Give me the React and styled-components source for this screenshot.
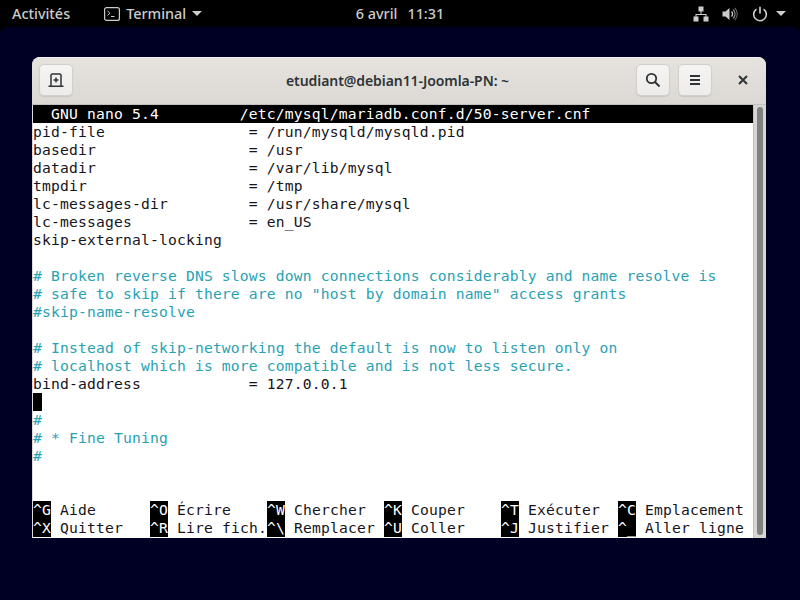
import React from "react";
import styled, { createGlobalStyle } from "styled-components";

const GlobalStyle = createGlobalStyle`
  html, body {
    margin: 0;
    padding: 0;
    background: #000;
  }
`;

const CONFIG_LINES = [
  { text: "pid-file                = /run/mysqld/mysqld.pid" },
  { text: "basedir                 = /usr" },
  { text: "datadir                 = /var/lib/mysql" },
  { text: "tmpdir                  = /tmp" },
  { text: "lc-messages-dir         = /usr/share/mysql" },
  { text: "lc-messages             = en_US" },
  { text: "skip-external-locking" },
  { text: "" },
  { text: "# Broken reverse DNS slows down connections considerably and name resolve is", comment: true },
  { text: '# safe to skip if there are no "host by domain name" access grants', comment: true },
  { text: "#skip-name-resolve", comment: true },
  { text: "" },
  { text: "# Instead of skip-networking the default is now to listen only on", comment: true },
  { text: "# localhost which is more compatible and is not less secure.", comment: true },
  { text: "bind-address            = 127.0.0.1" },
  { cursor: true },
  { text: "#", comment: true },
  { text: "# * Fine Tuning", comment: true },
  { text: "#", comment: true },
  { text: "" },
  { text: "" },
];

const SHORTCUTS = [
  [
    ["^G", "Aide"],
    ["^O", "Écrire"],
    ["^W", "Chercher"],
    ["^K", "Couper"],
    ["^T", "Exécuter"],
    ["^C", "Emplacement"],
  ],
  [
    ["^X", "Quitter"],
    ["^R", "Lire fich."],
    ["^\\", "Remplacer"],
    ["^U", "Coller"],
    ["^J", "Justifier"],
    ["^_", "Aller ligne"],
  ],
];

const App = () => {
  return (
    <Screen>
      <GlobalStyle />
      <TopBar>
        <BarLeft>
          <BarLabel>Activités</BarLabel>
          <AppMenu>
            <svg width="16" height="16" viewBox="0 0 16 16" fill="none">
              <rect x="0.6" y="1.6" width="14.8" height="12.8" rx="2" stroke="#ccc" strokeWidth="1.2" />
              <path d="M3.5 5l2.4 2.2-2.4 2.200" stroke="#ccc" strokeWidth="1" />
              <path d="M7 10.500h3.500" stroke="#ccc" strokeWidth="1" />
            </svg>
            <BarLabel>Terminal</BarLabel>
            <Caret />
          </AppMenu>
        </BarLeft>
        <Clock>
          <span>6 avril</span>
          <span>11:31</span>
        </Clock>
        <BarRight>
          <svg width="16" height="16" viewBox="0 0 16 16" fill="#ccc">
            <rect x="5.500" y="0.500" width="5" height="5" />
            <rect x="0.500" y="10.500" width="5" height="5" />
            <rect x="10.500" y="10.500" width="5" height="5" />
            <path d="M7.500 5h1v3h5v3h-1V9H3.500v2h-1V8h5z" />
          </svg>
          <svg width="16" height="16" viewBox="0 0 16 16" fill="none">
            <path d="M0.500 5.500h3L7.500 2v12l-4-3.500h-3z" fill="#ccc" />
            <path d="M9.500 5.500a3.500 3.500 0 0 1 0 5" stroke="#ccc" strokeWidth="1.300" />
            <path d="M11 3.500a6 6 0 0 1 0 9" stroke="#888" strokeWidth="1.200" />
            <path d="M12.800 2a8.500 8.500 0 0 1 0 12" stroke="#666" strokeWidth="1.100" />
          </svg>
          <PowerGroup>
            <svg width="16" height="16" viewBox="0 0 16 16" fill="none">
              <path d="M4.500 3.200a6.300 6.300 0 1 0 7 0" stroke="#ccc" strokeWidth="1.600" />
              <path d="M8 0.800v6.700" stroke="#ccc" strokeWidth="1.700" />
            </svg>
            <Caret />
          </PowerGroup>
        </BarRight>
      </TopBar>
      <Desktop>
        <Window>
          <HeaderBar>
            <HeaderButton>
              <svg width="16" height="16" viewBox="0 0 16 16" fill="none">
                <path d="M3 14V3.500A1.500 1.500 0 0 1 4.500 2h7A1.500 1.500 0 0 1 13 3.500V14" stroke="#2e3436" strokeWidth="1.500" />
                <path d="M0.500 14.200h15" stroke="#2e3436" strokeWidth="1.500" />
                <path d="M8 5.500v5M5.500 8h5" stroke="#2e3436" strokeWidth="1.500" />
              </svg>
            </HeaderButton>
            <Title>etudiant@debian11-Joomla-PN: ~</Title>
            <HeaderActions>
              <HeaderButton>
                <svg width="16" height="16" viewBox="0 0 16 16" fill="none">
                  <circle cx="6.500" cy="6.500" r="4.700" stroke="#2e3436" strokeWidth="1.800" />
                  <path d="M10 10l4.500 4.500" stroke="#2e3436" strokeWidth="2" />
                </svg>
              </HeaderButton>
              <HeaderButton>
                <svg width="16" height="16" viewBox="0 0 16 16" fill="#2e3436">
                  <rect x="3" y="3" width="10" height="2" />
                  <rect x="3" y="7" width="10" height="2" />
                  <rect x="3" y="11" width="10" height="2" />
                </svg>
              </HeaderButton>
              <CloseButton>
                <svg width="10" height="10" viewBox="0 0 10 10" fill="none">
                  <path d="M1 1l8 8M9 1l-8 8" stroke="#2e3436" strokeWidth="2" />
                </svg>
              </CloseButton>
            </HeaderActions>
          </HeaderBar>
          <TerminalArea>
            <Terminal>
              <TitleRow>{"  GNU nano 5.4         /etc/mysql/mariadb.conf.d/50-server.cnf"}</TitleRow>
              {CONFIG_LINES.map((line, i) => (
                <Row key={i} $comment={line.comment}>
                  {line.cursor ? <Cursor /> : line.text}
                </Row>
              ))}
              {SHORTCUTS.map((row, i) => (
                <ShortcutRow key={i}>
                  {row.map(([key, label]) => (
                    <Shortcut key={key}>
                      <KeyCap>{key}</KeyCap>
                      <span>{label}</span>
                    </Shortcut>
                  ))}
                </ShortcutRow>
              ))}
            </Terminal>
            <ScrollTrack>
              <ScrollThumb />
            </ScrollTrack>
          </TerminalArea>
        </Window>
      </Desktop>
    </Screen>
  );
};

const Screen = styled.div`
  width: 800px;
  height: 600px;
  display: flex;
  flex-direction: column;
  overflow: hidden;
  background: #000;
`;

const TopBar = styled.div`
  height: 27px;
  flex: none;
  display: grid;
  grid-template-columns: 1fr auto 1fr;
  align-items: center;
  padding: 0 12px;
  background: #000;
  color: #ccc;
  font-family: "Noto Sans", sans-serif;
  font-size: 14.4px;
  font-weight: 500;
`;

const BarLeft = styled.div`
  display: flex;
  align-items: center;
  gap: 34px;
`;

const BarLabel = styled.span`
  white-space: nowrap;
`;

const AppMenu = styled.div`
  display: flex;
  align-items: center;
  gap: 6px;
`;

const Caret = styled.span`
  width: 0;
  height: 0;
  border-left: 5.5px solid transparent;
  border-right: 5.5px solid transparent;
  border-top: 5px solid #ccc;
`;

const Clock = styled.div`
  display: flex;
  gap: 10px;
`;

const BarRight = styled.div`
  display: flex;
  justify-content: flex-end;
  align-items: center;
  gap: 13px;
  padding-right: 2px;
`;

const PowerGroup = styled.div`
  display: flex;
  align-items: center;
  gap: 8px;
  margin-left: 1px;
`;

const Desktop = styled.div`
  flex: 1;
  padding: 30px 34px 62px 32px;
  background: #000025;
  border-radius: 8px 8px 0 0;
`;

const Window = styled.div`
  height: 100%;
  display: flex;
  flex-direction: column;
  border-radius: 8px 8px 0 0;
  overflow: hidden;
  background: #dedbd7;
`;

const HeaderBar = styled.div`
  height: 48px;
  flex: none;
  display: flex;
  align-items: center;
  justify-content: space-between;
  position: relative;
  box-sizing: border-box;
  padding: 0 6px 2px 7px;
  background: linear-gradient(#e6e3df, #dcd9d5);
  border-top: 1px solid #f4f2f0;
  border-bottom: 1px solid #c4c0bb;
`;

const HeaderButton = styled.div`
  width: 34px;
  height: 32px;
  display: flex;
  align-items: center;
  justify-content: center;
  box-sizing: border-box;
  border: 1px solid #d3cfca;
  border-radius: 5px;
  background: linear-gradient(#f5f4f2, #eeecea);
  box-shadow: 0 1px 1px #c9c5c0;
`;

const CloseButton = styled.div`
  width: 34px;
  height: 32px;
  display: flex;
  align-items: center;
  justify-content: center;
  margin-left: 6px;
`;

const HeaderActions = styled.div`
  display: flex;
  align-items: center;
  gap: 8px;
`;

const Title = styled.div`
  position: absolute;
  left: 0;
  right: 0;
  text-align: center;
  color: #2e3436;
  font-family: "Noto Sans", sans-serif;
  font-size: 14px;
  font-weight: 600;
  letter-spacing: -0.07px;
  padding-right: 3px;
  pointer-events: none;
`;

const TerminalArea = styled.div`
  flex: 1;
  min-height: 0;
  display: flex;
  padding-left: 1px;
`;

const Terminal = styled.div`
  width: 720px;
  flex: none;
  background: #fff;
  color: #171421;
  font-family: "DejaVu Sans Mono", monospace;
  font-size: 14.67px;
  letter-spacing: 0.17px;
  line-height: 18px;
  white-space: pre;
`;

const Row = styled.div`
  height: 18px;
  color: ${({ $comment }) => ($comment ? "#2aa1b3" : "#171421")};
`;

const TitleRow = styled(Row)`
  background: #000;
  color: #fff;
`;

const Cursor = styled.span`
  display: block;
  width: 9px;
  height: 18px;
  background: #000;
`;

const ShortcutRow = styled.div`
  display: grid;
  grid-template-columns: repeat(5, 117px) 135px;
  height: 18px;
`;

const Shortcut = styled.div`
  display: flex;
  gap: 9px;
`;

const KeyCap = styled.span`
  width: 18px;
  flex: none;
  background: #000;
  color: #fff;
`;

const ScrollTrack = styled.div`
  flex: 1;
  box-sizing: border-box;
  padding: 2px 3px 3px 3px;
  background: #d8d6d2;
  border-left: 1px solid #c4c0bb;
`;

const ScrollThumb = styled.div`
  height: 100%;
  border-radius: 3px;
  background: #7f8181;
`;

export default App;
